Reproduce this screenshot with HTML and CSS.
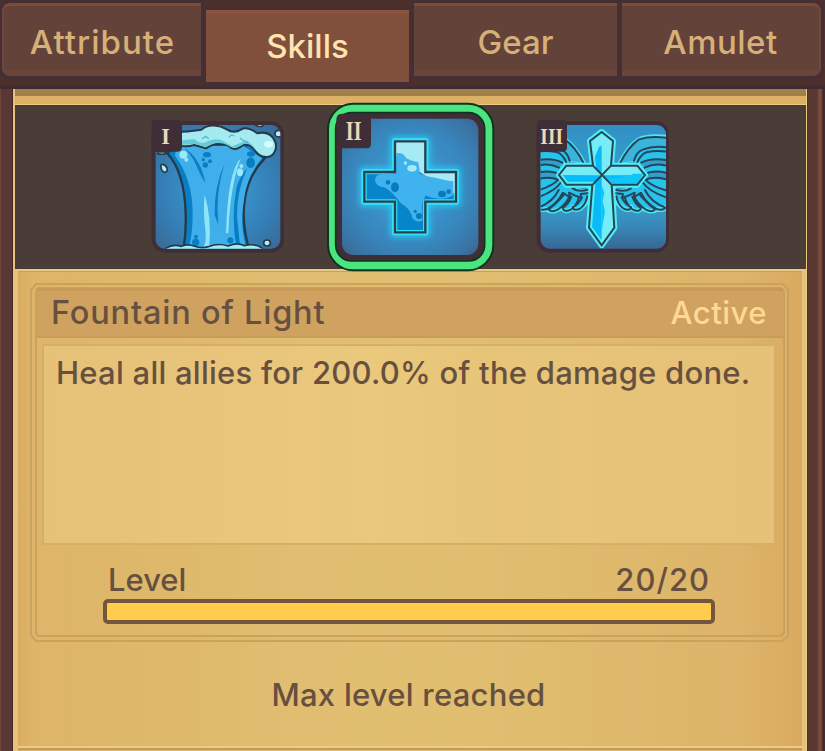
FILE: index.html
```html
<!DOCTYPE html>
<html lang="en">
<head>
<meta charset="utf-8">
<title>Skills</title>
<link rel="stylesheet" href="styles.css">
</head>
<body>
<nav class="tabs">
  <div class="tab first"><span class="t-attribute">Attribute</span></div>
  <div class="tab active"><span class="t-skills">Skills</span></div>
  <div class="tab"><span class="t-gear">Gear</span></div>
  <div class="tab last"><span class="t-amulet">Amulet</span></div>
</nav>
<main class="frame">
  <div class="panel">
    <div class="strip"></div>
    <div class="skills">
      <svg class="skill" viewBox="0 0 465 465">
        <defs>
          <radialGradient id="sky" cx=".5" cy=".5" r=".72"><stop offset="0" stop-color="#3fa0dc"/><stop offset=".6" stop-color="#347fb5"/><stop offset="1" stop-color="#3b638e"/></radialGradient>
          <clipPath id="c1"><rect x="47" y="45" width="374" height="371" rx="27"/></clipPath>
        </defs>
        <rect x="35" y="33" width="397" height="395" rx="39" fill="#402e37"/>
        <g clip-path="url(#c1)">
          <rect x="40" y="40" width="390" height="390" fill="url(#sky)"/>
          <path d="M82 130C120 172 135 235 137 310Q139 370 130 420H328C314 374 307 320 314 272C321 215 345 175 374 145L330 105 110 100Z" fill="#087fc5" stroke="#253947" stroke-width="7"/>
          <path d="M105 137C140 184 158 240 158 310Q158 370 147 412H318C304 360 304 320 312 270C319 210 344 172 366 145L310 108H110Z" fill="#40aeea"/>
          <path d="M134 114Q184 148 196 220Q178 190 170 168Q160 144 134 114M254 160Q222 230 224 315L235 344Q225 250 254 160M290 230Q302 195 322 175Q290 240 291 320L300 405H288Q273 320 290 230" fill="#087fc5"/>
          <path d="M302 145Q263 185 258 370H265Q270 230 302 145M194 254Q189 300 195 350T190 410H208Q215 318 194 254" fill="#8ce6f5"/>
          <g fill="#087fc5"><ellipse cx="201" cy="134" rx="12" ry="8"/><circle cx="190" cy="149" r="5"/><circle cx="196" cy="165" r="8"/><circle cx="210" cy="154" r="6"/><ellipse cx="333" cy="132" rx="12" ry="8"/><ellipse cx="332" cy="158" rx="13" ry="16"/><circle cx="168" cy="380" r="6"/><circle cx="167" cy="397" r="11"/><circle cx="271" cy="391" r="9"/></g>
          <g fill="#9aebf5"><circle cx="130" cy="134" r="12"/><circle cx="139" cy="149" r="6"/><circle cx="304" cy="168" r="6"/><ellipse cx="300" cy="187" rx="9" ry="12"/></g>
          <path d="M105 66C145 66 160 63 184 59C205 40 240 46 260 58Q282 72 304 58C318 48 342 62 352 70Q388 61 403 90C416 112 402 140 382 141C360 142 350 130 338 113Q321 92 302 110Q282 125 266 108C240 91 215 105 198 115Q178 109 163 105Q136 112 120 106Z" fill="#a6eaf1" stroke="#253947" stroke-width="6"/>
          <path d="M122 92Q145 88 164 88Q184 107 204 93Q226 84 246 91L276 109Q294 102 314 93Q339 98 348 123L338 110Q320 94 302 107Q280 122 263 106Q230 90 198 111L165 102L123 105Z" fill="#67cbd7"/>
          <path d="M186 86l12-7 8 7m60-5 9-6 8 3m17 6 10 8 15 4" fill="none" stroke="#54bac8" stroke-width="4"/>
          <ellipse cx="386" cy="103" rx="13" ry="10" fill="#d7fbf8"/>
          <path d="M77 415Q98 401 124 409Q145 400 164 409Q185 416 205 410Q235 398 264 408Q293 396 313 407Q346 399 367 415V425H77Z" fill="#a6eaf1" stroke="#253947" stroke-width="5"/>
          <g fill="#b7eef6" stroke="#253947" stroke-width="5"><path d="M63 164Q73 160 81 174Q84 187 73 187Q61 182 63 164"/><ellipse cx="381" cy="399" rx="10" ry="9"/><circle cx="415" cy="71" r="10"/><path d="M50 126H82Q75 137 50 130M341 40H374L366 49Q350 52 341 40"/></g>
        </g>
        <path d="M44 30H114Q126 30 126 42V112Q126 125 113 125H35V42Q35 30 44 30" fill="#402e37"/>
        <text class="numeral" x="77" y="101" textLength="26" lengthAdjust="spacingAndGlyphs">I</text>
      </svg>
      <svg class="skill selected" viewBox="0 0 540 534">
        <defs>
          <filter id="glow" x="-30%" y="-30%" width="160%" height="160%"><feGaussianBlur stdDeviation="9"/></filter>
          <radialGradient id="sky2" cx=".5" cy=".5" r=".72"><stop offset="0" stop-color="#3fa0dc"/><stop offset=".6" stop-color="#3787bd"/><stop offset=".85" stop-color="#3a73a4"/><stop offset="1" stop-color="#3e5d85"/></radialGradient>
        </defs>
        <rect x="24" y="17" width="496" height="500" rx="76" fill="#4ae57f" stroke="#0c3420" stroke-width="6"/>
        <rect x="47" y="44" width="447" height="445" rx="48" fill="#402e37" stroke="#0c3420" stroke-width="5"/>
        <rect x="66" y="62" width="409" height="409" rx="34" fill="url(#sky2)"/>
        <path d="M222 127H319V219H411V314H319V406H222V314H130V219H222Z" fill="none" stroke="#25cdf8" stroke-width="20" filter="url(#glow)"/>
        <path d="M224 129H317V221H409V312H317V404H224V312H132V221H224Z" fill="#0785ca" stroke="#32e2fb" stroke-width="16" stroke-linejoin="round"/>
        <path d="M224 129H317V221H409V290L340 250 224 170Z" fill="#a6eaf5"/>
        <path d="M230 165Q252 164 259 181Q275 190 294 192Q300 210 298 226Q320 237 350 240Q380 249 400 250V291Q379 304 358 302Q330 300 317 292L307 314V368Q289 375 277 360Q273 340 256 325Q240 316 230 300Q211 277 192 268Q168 267 165 247Q166 228 188 228L226 225Z" fill="#40b2ed"/>
        <g fill="#087bbd"><circle cx="204" cy="253" r="7"/><ellipse cx="225" cy="268" rx="12" ry="15"/><ellipse cx="366" cy="288" rx="12" ry="10"/><circle cx="386" cy="281" r="7"/><circle cx="286" cy="340" r="5"/><circle cx="297" cy="354" r="9"/></g>
        <g fill="#a6eaf5"><circle cx="256" cy="195" r="5"/><ellipse cx="276" cy="211" rx="14" ry="10"/></g>
        <path d="M225 130H316V222H408V311H316V403H225V311H133V222H225Z" fill="none" stroke="#29404e" stroke-width="7"/>
        <path d="M65 47H153V137Q153 151 139 151H49V66Q49 47 65 47" fill="#402e37"/>
        <text class="numeral big" x="101" y="125" textLength="47" lengthAdjust="spacingAndGlyphs">II</text>
      </svg>
      <svg class="skill" viewBox="0 0 465 465">
        <defs>
          <clipPath id="c3"><rect x="47" y="45" width="376" height="371" rx="27"/></clipPath>
          <linearGradient id="sky3" x2="0" y2="1"><stop offset="0" stop-color="#328fc3"/><stop offset=".55" stop-color="#35a7d3"/><stop offset=".8" stop-color="#3787b8"/><stop offset="1" stop-color="#385f8c"/></linearGradient>
          <g id="wing">
            <path d="M286 158Q310 110 342 88Q380 74 440 84V290L421 293Q417 302 396 298Q381 309 363 299L348 294Q344 309 322 298L318 291Q314 305 296 296Q278 280 268 270V238L300 235 340 160Z" fill="#28c3ea" stroke="#48e9f3" stroke-width="14" stroke-linejoin="round"/>
            <path d="M286 158Q315 105 350 88Q390 78 430 84V114Q386 107 354 119Q337 126 329 153Z" fill="#3bb4dc"/>
            <path d="M262 165L327 155 337 158 349 170 340 214 327 231 274 239Z" fill="#329fcb"/>
            <path d="M349 158Q378 142 430 151V165Q391 155 359 173M361 190Q388 178 430 191V209Q391 196 361 209" fill="#349fcc"/>
            <g fill="none" stroke="#24455a" stroke-width="6" stroke-linecap="round" stroke-linejoin="round">
              <path d="M286 158Q310 110 342 88Q380 76 430 84M327 152Q334 126 353 119Q386 106 430 113M337 157Q349 130 367 126Q398 120 430 126"/>
              <path d="M349 158Q378 142 430 151M359 173Q391 157 430 168M361 191Q392 178 430 190M361 209Q393 197 430 210"/>
              <path d="M361 209Q382 231 430 243M352 216Q374 247 430 264M360 240Q377 276 421 293Q417 302 396 298Q365 282 348 249"/>
              <path d="M274 240Q302 246 318 235L316 227 332 225 340 214M342 251Q361 276 390 298Q381 309 363 299Q334 281 327 256M322 260Q331 284 348 294Q344 309 322 298Q303 282 299 260M290 262Q301 284 318 291Q314 305 296 296Q278 282 274 259M273 250L294 252 292 264 310 257 329 248 326 262 347 249"/>
            </g>
          </g>
        </defs>
        <rect x="35" y="33" width="397" height="395" rx="39" fill="#402e37"/>
        <g clip-path="url(#c3)">
          <rect x="40" y="40" width="390" height="390" fill="url(#sky3)"/>
          <use href="#wing"/><use href="#wing" transform="translate(461 0) scale(-1 1)"/>
          <path d="M230 66L264 93 258 167H337L360 195 337 224H260L268 353 230 406 192 353 202 224H124L102 195 124 167H204L195 93Z" fill="#08baf5" stroke="#50eff5" stroke-width="18" stroke-linejoin="round"/>
          <path d="M230 68L262 93 255 168 230 196ZM104 195L125 169H204L230 196ZM230 196L258 168H337L358 195ZM230 197L257 224 266 353 230 404Z" fill="#76edf6"/>
          <path d="M230 70L200 94 208 145 222 110 235 105Z" fill="#76edf6"/>
          <path d="M244 204h45l8-7h18l9-6h30l-16 30H260ZM230 225l8 24-5 25 7 30-10 60Z" fill="#10c5f8"/>
          <path d="M230 66L264 93 258 167H337L360 195 337 224H260L268 353 230 406 192 353 202 224H124L102 195 124 167H204L195 93ZM204 167L259 224M258 167L203 224" fill="none" stroke="#254657" stroke-width="6"/>
        </g>
        <path d="M48 30H114Q126 30 126 42V112Q126 125 113 125H35V43Q35 30 48 30" fill="#402e37"/>
        <text class="numeral" x="80" y="101" textLength="68" lengthAdjust="spacingAndGlyphs">III</text>
      </svg>
    </div>
    <section class="content">
      <div class="card">
        <svg class="outline" viewBox="0 0 760 360"><g fill="none"><path class="line" d="M6 1H753L758 6V353L752 358H6L1 352V7Z"/><path class="light" d="M7 3H752L756 8V352L751 356H8L3 351V8Z"/><path class="line" d="M8 5H751L754 8V350L751 353H8L6 350V8Z"/></g></svg>
        <header class="head"><h1 class="t-title">Fountain of Light</h1><span class="t-active">Active</span></header>
        <div class="desc"><p class="t-desc">Heal all allies for 200.0% of the damage done.</p></div>
        <div class="level"><span class="t-level">Level</span><span class="t-count">20/20</span></div>
        <div class="bar"></div>
      </div>
      <p class="max"><span class="t-max">Max level reached</span></p>
      <div class="bottom"></div>
    </section>
  </div>
</main>
</body>
</html>
```
FILE: styles.css
```css
* { box-sizing: border-box; }
body {
  margin: 0;
  width: 825px;
  height: 751px;
  overflow: hidden;
  background: #4d302c;
  color: #67503f;
  font: 500 31px/40px Inter, "Liberation Sans", sans-serif;
}
h1, p { margin: 0; font: inherit; }
span, h1, p { white-space: nowrap; }
.tabs {
  display: grid;
  grid-template-columns: 199px 203px 203px 199px;
  column-gap: 5px;
  height: 89px;
  padding: 3px 0 0 2px;
  background: linear-gradient(#4b302d 0 75px, #4b302b 76px 84px, #402b32 88px);
}
.tab {
  height: 73px;
  padding-top: 16px;
  text-align: center;
  font-size: 33px;
  color: #d6b078;
  background: #63423a;
  border-top: 3px solid #7d4c38;
  border-bottom: 5px solid #6d4439;
  box-shadow: 0 0 0 3px #432f34;
}
.first { border-radius: 8px 0 0 8px; border-left: 2px solid #70473b; }
.last { border-radius: 0 8px 8px 0; border-right: 2px solid #70473b; }
.active {
  height: 72px;
  margin-top: 7px;
  padding-top: 13px;
  color: #ffe3b1;
  background: #80503c;
  border-color: #8d543d;
  border-bottom-color: #80503c;
}
.t-attribute { letter-spacing: 1px; }
.t-amulet { letter-spacing: .5px; }
.frame {
  height: 662px;
  padding: 0 18px 0 13px;
  background: linear-gradient(90deg, #70463c 0 1px, #5a3832 1px 12px, #40292b 12px 13px, #40292b 805px 807px, #5a3832 808px 817px, #7c4d3e 819px 821px, #40292f 823px);
}
.panel {
  height: 662px;
  border-left: 2px solid #e5c37d;
  border-right: 1px solid #e9cc86;
  background: #deb86b;
}
.strip {
  height: 16px;
  border-bottom: 1px solid #edcb86;
  background: linear-gradient(#a28049 0 7px, #dcb065 7px);
}
.skills {
  display: flex;
  align-items: center;
  gap: 25px;
  height: 164px;
  padding-left: 125px;
  background: #4a3c37;
}
.skill { flex: none; width: 155px; height: 155px; }
.selected { width: 180px; height: 178px; position: relative; }
.numeral { font: bold 70px "Liberation Serif", serif; fill: #eadab7; text-anchor: middle; }
.big { font-size: 80px; }
.content {
  height: 482px;
  padding: 12px 15px 0 12px;
  border-top: 2px solid #e9ca83;
  border-left: 3px solid #e5c37d;
  border-right: 4px solid #e5c37d;
  box-shadow: inset 0 1px #c79f5b;
  background: linear-gradient(90deg, #d9ab60 0, #dfb569 15px, #ddb76a 12%, #e0bd70 35%, #e1bf71 50%, #dfbb6e 70%, #ddb469 92%, #d9aa60);
}
.card {
  display: grid;
  grid-template-rows: 50px 207px 54px 25px;
  position: relative;
  height: 360px;
  width: 760px;
  padding: 5px 7px;
}
.outline { position: absolute; inset: 0; width: 760px; height: 360px; }
.line { stroke: #cca05d; stroke-width: 2; }
.light { stroke: #e0b66c; stroke-width: 1; }
.head {
  display: flex;
  position: relative;
  justify-content: space-between;
  padding: 2px 16px 0 14px;
  background: #cfa35f;
  border-top: 3px solid #c89a57;
  border-bottom: 2px solid #c99c59;
}
.t-title { font-size: 32.5px; letter-spacing: .8px; }
.t-active { color: #ffd894; letter-spacing: .5px; }
.desc {
  margin: 6px 7px 0 5px;
  padding: 7px 0 0 12px;
  border: 2px solid #d6ae66;
  background: linear-gradient(90deg, #e6c178, #eac87c 45%, #e7c578 60%, #e6c178);
}
.t-desc { letter-spacing: .25px; }
.t-max { letter-spacing: .25px; }
.t-count { letter-spacing: 1px; margin-right: -1px; }
.level { display: flex; justify-content: space-between; padding: 15px 74px 0 71px; }
.bar {
  margin: 0 68px 0 66px;
  height: 25px;
  border: 4px solid #72563e;
  border-radius: 5px;
  background: #ffcc4c;
}
.max { padding-top: 32px; height: 103px; text-align: center; }
.bottom { height: 4px; margin: 0 -15px 0 -12px; border-top: 2px solid #eccb84; background: #c39a59; }
```
